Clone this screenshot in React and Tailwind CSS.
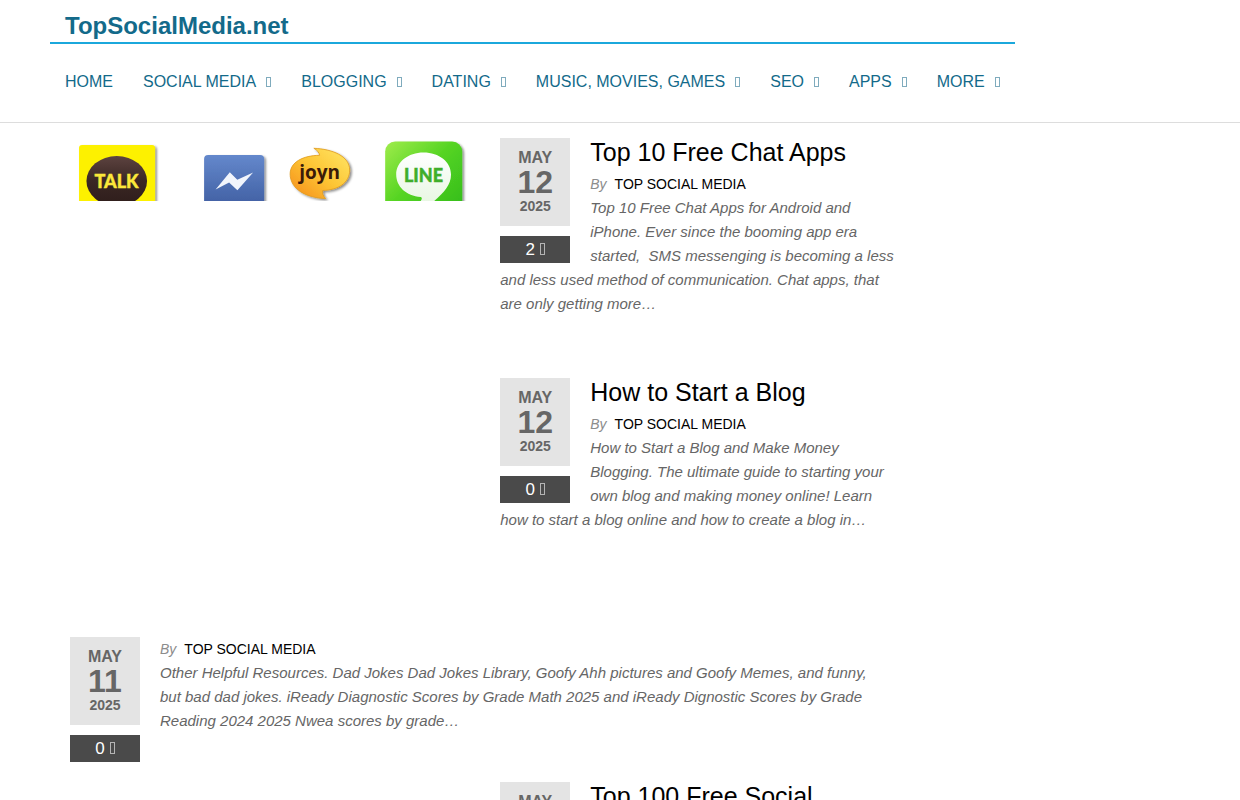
import React from 'react'

const menu = [
  { label: 'HOME' },
  { label: 'SOCIAL MEDIA', sub: true },
  { label: 'BLOGGING', sub: true },
  { label: 'DATING', sub: true },
  { label: 'MUSIC, MOVIES, GAMES', sub: true },
  { label: 'SEO', sub: true },
  { label: 'APPS', sub: true },
  { label: 'MORE', sub: true },
]

const Header = () => (
  <header className='border-b border-[#dddddd]'>
    <div className='max-w-[1170px] mx-auto px-[15px]'>
      <div className='w-fit'>
        <div className='border-b-2 border-[#1ba8dc] px-[15px] pt-[10px]'>
          <h1 className='text-[24px] leading-[32px] font-bold text-[#136a8a]'>
            <a href='#'>TopSocialMedia.net</a>
          </h1>
        </div>
        <nav className='pt-7 pb-[30px]'>
          <ul className='flex'>
            {menu.map((item) => (
              <li key={item.label} className='px-[15px]'>
                <a href='#' className='flex items-center text-base leading-5 text-[#136a8a] whitespace-nowrap'>
                  {item.label}
                  {item.sub && <span className='w-[5px] h-[10px] ml-[10px] border border-[#7fabbd]' />}
                </a>
              </li>
            ))}
          </ul>
        </nav>
      </div>
    </div>
  </header>
)

const ChatAppsImage = () => (
  <svg viewBox='0 0 400 63' className='block w-full' role='img' aria-label='Chat apps'>
    <defs>
      <linearGradient id='brown' x1='0' y1='0' x2='0' y2='1'>
        <stop offset='0' stopColor='#5d4340' />
        <stop offset='0.5' stopColor='#3a2724' />
        <stop offset='1' stopColor='#2e1d1b' />
      </linearGradient>
      <linearGradient id='blue' x1='0' y1='0' x2='0' y2='1'>
        <stop offset='0' stopColor='#6488cc' />
        <stop offset='1' stopColor='#3a589b' />
      </linearGradient>
      <linearGradient id='orange' x1='1' y1='0' x2='0' y2='1'>
        <stop offset='0' stopColor='#ffe768' />
        <stop offset='0.5' stopColor='#fdc534' />
        <stop offset='1' stopColor='#f58a1a' />
      </linearGradient>
      <linearGradient id='green' x1='0' y1='0' x2='1' y2='1'>
        <stop offset='0' stopColor='#a0ec4c' />
        <stop offset='0.45' stopColor='#55d422' />
        <stop offset='1' stopColor='#2fb91c' />
      </linearGradient>
      <linearGradient id='bubble' x1='0' y1='0' x2='0' y2='1'>
        <stop offset='0' stopColor='#ffffff' />
        <stop offset='1' stopColor='#e9f7e4' />
      </linearGradient>
      <filter id='shadow' x='-20%' y='-20%' width='140%' height='140%'>
        <feDropShadow dx='1.8' dy='1.5' stdDeviation='1' floodColor='#000000' floodOpacity='0.45' />
      </filter>
    </defs>

    {/* kakao talk */}
    <rect x='9' y='7' width='76' height='76' rx='3' fill='#fdf100' filter='url(#shadow)' />
    <ellipse cx='46.7' cy='43' rx='30.3' ry='25' fill='url(#brown)' />
    <text x='46.5' y='50' textAnchor='middle' fontFamily='Lato, sans-serif' fontWeight='900' fontSize='18' fill='#fbe83a' stroke='#fbe83a' strokeWidth='0.4'>TALK</text>

    {/* messenger */}
    <rect x='134' y='17' width='60' height='60' rx='4' fill='url(#blue)' filter='url(#shadow)' />
    <path d='M145.5 51.5 L159.7 34.3 L167.2 41.8 L183 34.5 L167.3 52.2 L159 44.5 Z' fill='#f1f5fc' />

    {/* joyn */}
    <path
      d='M243.7 10.3 C262 11 279.5 18 279.5 32 C279.5 45 268 52 252.5 52.5 C252 55.5 253 58 255.5 60.5 C236 60 220 51 220 36 C220 24 233 17.5 249.5 17.3 C249 14.5 247 12 243.7 10.3 Z'
      fill='url(#orange)'
      stroke='#e09a1c'
      strokeWidth='0.8'
      filter='url(#shadow)'
    />
    <text x='249.5' y='41' textAnchor='middle' fontFamily='"Open Sans", sans-serif' fontWeight='700' fontSize='19' fill='#3b1a08'>joyn</text>

    {/* line */}
    <rect x='315' y='3.5' width='77' height='77' rx='10' fill='url(#green)' filter='url(#shadow)' />
    <path
      d='M353.3 14.5 C369 14.5 380.8 24 380.8 36.5 C380.8 47 374 54 364 63 L350.5 63 C352 60.5 352 59.5 350.5 59 C336 58 326 48.5 326 36.5 C326 24 338 14.5 353.3 14.5 Z'
      fill='url(#bubble)'
    />
    <text x='353.3' y='44.3' textAnchor='middle' fontFamily='Lato, sans-serif' fontWeight='900' fontSize='18' fill='#3fae2a' stroke='#3fae2a' strokeWidth='0.4'>LINE</text>
  </svg>
)

const posts = [
  {
    title: 'Top 10 Free Chat Apps',
    day: '12',
    comments: 2,
    image: <div className='h-[220px]'><ChatAppsImage /></div>,
    text: 'Top 10 Free Chat Apps for Android and iPhone. Ever since the booming app era started, \u00a0SMS messenging is becoming a less and less used method of communication. Chat apps, that are only getting more…',
  },
  {
    title: 'How to Start a Blog',
    day: '12',
    comments: 0,
    image: <div className='h-[239px]' />,
    text: 'How to Start a Blog and Make Money Blogging. The ultimate guide to starting your own blog and making money online! Learn how to start a blog online and how to create a blog in…',
  },
  {
    day: '11',
    comments: 0,
    text: 'Other Helpful Resources. Dad Jokes Dad Jokes Library, Goofy Ahh pictures and Goofy Memes, and funny, but bad dad jokes. iReady Diagnostic Scores by Grade Math 2025 and iReady Dignostic Scores by Grade Reading 2024 2025 Nwea scores by grade…',
  },
  {
    title: 'Top 100 Free Social',
    day: '11',
    comments: 0,
    image: <div className='h-[220px]' />,
    text: '',
  },
]

const PostMeta = ({ day, comments }) => (
  <div className='float-left w-[70px] mr-5 text-center'>
    <time className='block bg-[#e4e4e4] py-[10px] font-bold text-[#666666]'>
      <span className='block text-base leading-5'>MAY</span>
      <span className='block text-[32px] leading-7'>{day}</span>
      <span className='block text-sm leading-5'>2025</span>
    </time>
    <a href='#' className='flex items-center justify-center mt-[10px] bg-[#4a4a4a] text-white text-[17px] leading-[27px]'>
      {comments}
      <span className='w-[5px] h-3 ml-[5px] mb-px border border-[#b4b4b4]' />
    </a>
  </div>
)

const Post = ({ post }) => (
  <article className={post.image ? 'grid grid-cols-2 gap-[30px] mb-5' : 'mb-5 pr-[15px]'}>
    {post.image}
    <div className='flow-root'>
      <PostMeta day={post.day} comments={post.comments} />
      {post.title && (
        <h2 className='text-[25px] leading-7 mb-[6px] text-black'>
          <a href='#'>{post.title}</a>
        </h2>
      )}
      <p className='text-sm leading-6'>
        <span className='italic text-[#8c8c8c] mr-2'>By</span>
        <a href='#' className='text-black'>TOP SOCIAL MEDIA</a>
      </p>
      <p className='text-[15px] leading-6 italic text-[#666666]'>{post.text}</p>
    </div>
  </article>
)

const App = () => {
  return (
    <div className='min-h-screen bg-white font-["Liberation_Sans",Arial,sans-serif]'>
      <Header />
      <div className='max-w-[1170px] mx-auto'>
        <main className='w-3/4 pl-[35px] pr-3 pt-[15px]'>
          {posts.map((post, i) => (
            <Post key={i} post={post} />
          ))}
        </main>
      </div>
    </div>
  )
}

export default App
